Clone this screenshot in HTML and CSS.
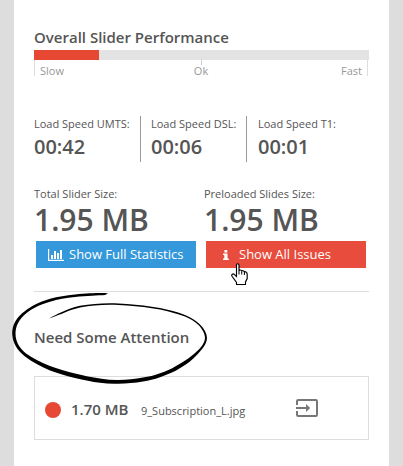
FILE: index.html
```html
<!DOCTYPE html>
<html lang="en">
<head>
<meta charset="utf-8">
<title>Slider Performance</title>
<link rel="stylesheet" href="styles.css">
</head>
<body>
<main class="panel">
  <h2 class="title">Overall Slider Performance</h2>
  <div class="bar"><div class="bar-fill"></div></div>
  <div class="scale">
    <span class="slow">Slow</span>
    <span class="ok">Ok</span>
    <span class="fast">Fast</span>
  </div>

  <section class="speeds">
    <div class="speed speed-umts"><div class="label">Load Speed UMTS:</div><div class="time">00:42</div></div>
    <div class="speed speed-dsl"><div class="label">Load Speed DSL:</div><div class="time">00:06</div></div>
    <div class="speed speed-t1"><div class="label">Load Speed T1:</div><div class="time">00:01</div></div>
  </section>

  <section class="sizes">
    <div class="size">
      <div class="label">Total Slider Size:</div>
      <div class="amount">1.95 MB</div>
      <a class="button blue">
        <svg class="chart" width="16" height="12" viewBox="0 0 16 12" fill="#fff"><path d="M0 0h1.2v10.8H16V12H0zM3 6h2v4H3zM6 2h2v8H6zM9 4h2v6H9zM12 1h2v9h-2z"/></svg>
        <span class="button-text">Show Full Statistics</span>
      </a>
    </div>
    <div class="size">
      <div class="label">Preloaded Slides Size:</div>
      <div class="amount">1.95 MB</div>
      <a class="button red">
        <svg class="info" width="6" height="10" viewBox="0 0 6 10" fill="#fff"><path d="M1.4 0h2.9v2.4H1.4zM0 3.4h4.5v5.100H5.8V10H0V8.500h1.300V4.900H0z"/></svg>
        <span class="button-text">Show All Issues</span>
      </a>
      <svg class="cursor" width="18" height="23" viewBox="0 0 18 23"><path d="M5.500 13.500V2Q5.500.700 6.700.700T8 2v6Q8 7 9.300 7T10.700 8.500V8Q11 7.500 12 7.700T13.400 9V8.800Q14 8.300 15 9T16.200 11v4.500L14.500 19v2.500h-9V19.500L1.200 13.500Q.200 12 1.300 11.200T3.500 11.700z" fill="#fff" stroke="#000" stroke-width="1.150"/><path d="M8 8v3.500M10.700 8.500v3M13.400 9v3" fill="none" stroke="#000"/></svg>
    </div>
  </section>

  <div class="rule"></div>

  <div class="attention">
    <h2 class="title">Need Some Attention</h2>
    <svg class="scribble" width="200" height="96" viewBox="10 290 200 96">
      <path d="M108 293.500C104 292.800 92 293 75 294.500C66 295.500 58 296.500 50 298.800C38 302.500 31 306.500 25 311C17 317 12 324 12.200 334C12.800 343 17 350 25 356.500C33 362.500 41 366.500 50 370.500C59 373.800 67 376 75 378C84 380.200 92 381.800 100 382.800C106 383.600 112 384 118 383.700C127 383.700 135 382.800 143 381.500C149 380.500 154 379.300 160 377.200C166 375.200 172 372.500 177 370C183 366.500 189 362.500 193 358.700C201 351 206.800 345 207 338C206.800 333 204 328.500 200 324.500C196 320.500 191 317.500 185 315C177 311.800 169 309.800 160 308C149 306 138 304.800 127 304C121 303.500 116 303.200 110 303.200C99 303.200 90 304 80 305.800C73 307.500 67 309.500 62 312C57 314 53 316.200 49 318.500C54 316.800 58 315 62 313.700C68 311 74 308.800 80 307.500C90 305.500 99 304.700 110 304.700C116 304.700 121 304.900 127 305.500C138 306.300 149 307.600 160 309.500C169 311.500 177 313.500 185 316.500C190 318.500 195 321.500 199 325.500C202 329 204.800 333 205 338C204.800 344 199 350 192 355.500C187 359.500 182 362.800 176 366C171 369 166 371.500 160 373.300C154 375.500 149 376.800 143 377.500C135 379 127 379.800 118 380C112 380 106 379.500 100 378.500C92 377.500 84 375.800 75 373.500C67 371.500 59 369.500 50 366C41 362.500 33 358.500 26 353.500C19 347.500 15.800 342 15.500 334C15.500 326 19 319.500 26 313.500C32 308.500 39 304.800 50 301.700C58 299.300 66 297.900 75 297C87 295.600 98 295.600 105 295Z"/>
    </svg>
  </div>

  <div class="issue">
    <span class="dot"></span>
    <strong class="issue-size">1.70 MB</strong>
    <span class="file">9_Subscription_L.jpg</span>
    <svg class="enter" width="22" height="18" viewBox="0 0 22 18"><path d="M1 6V2.300Q1 1 2.300 1h17.400Q21 1 21 2.300v13.400Q21 17 19.700 17H2.300Q1 17 1 15.700V12" fill="none" stroke="#777" stroke-width="2"/><path d="M0 8.100h10V5l4.200 4L10 13V9.900H0z" fill="#777"/></svg>
  </div>
</main>
</body>
</html>
```
FILE: styles.css
```css
* { box-sizing: border-box; }
body {
  margin: 0;
  background: #ddd;
  color: #555;
  font-family: "Open Sans", sans-serif;
}
.panel {
  width: 375px;
  height: 466px;
  margin-left: 14px;
  padding: 27px 20px 0;
  background: #fff;
}
.title {
  margin: 0;
  font-size: 15px;
  line-height: 20px;
  font-weight: 600;
  white-space: nowrap;
}
.bar {
  height: 10px;
  margin-top: 3px;
  background: #e3e3e3;
}
.bar-fill {
  width: 65px;
  height: 10px;
  background: #e64834;
}
.scale {
  display: flex;
  justify-content: space-between;
  width: 334px;
  height: 16px;
  padding: 0 5px;
  border: solid #ddd;
  border-width: 0 1px;
  color: #999;
  font-size: 11px;
  line-height: 22px;
}
.ok {
  margin-left: -3px;
  background: linear-gradient(#ccc, #ccc) 50% 0 / 1px 5px no-repeat;
}
.speeds {
  display: flex;
  height: 46px;
  margin-top: 40px;
}
.speed {
  white-space: nowrap;
}
.speed-umts { width: 107px; border-right: 1px solid #999; }
.speed-dsl { width: 106px; padding-left: 10px; border-right: 1px solid #999; }
.speed-t1 { padding-left: 11px; }
.label {
  font-size: 11px;
  line-height: 16px;
}
.time {
  margin-top: 3px;
  font-size: 20px;
  line-height: 24px;
  font-weight: 600;
}
.sizes {
  display: flex;
  margin-top: 24px;
}
.size {
  position: relative;
  flex: none;
  width: 170px;
}
.amount {
  margin-top: 1px;
  font-size: 30px;
  line-height: 34px;
  font-weight: 600;
}
.button {
  display: flex;
  align-items: center;
  width: 160px;
  height: 27px;
  margin: 4px 0 0 2px;
  color: #fff;
  font-size: 13px;
  line-height: 27px;
  white-space: nowrap;
}
.blue { padding-left: 12px; background: #3498db; }
.red { padding-left: 17px; background: #e74c3c; }
.chart { margin-right: 5px; }
.info { margin-right: 10px; }
.cursor {
  position: absolute;
  left: 27px;
  top: 77px;
}
.rule {
  height: 1px;
  margin-top: 23px;
  background: #ddd;
}
.attention {
  position: relative;
  height: 84px;
  padding-top: 35px;
}
.scribble {
  position: absolute;
  left: -24px;
  top: -2px;
  z-index: 1;
  fill: #000;
}
.issue {
  display: flex;
  align-items: center;
  height: 64px;
  padding-left: 10px;
  border: 1px solid #ddd;
}
.dot {
  width: 16px;
  height: 16px;
  margin-top: 3px;
  border-radius: 50%;
  background: #e64834;
}
.issue-size {
  width: 70px;
  margin: 2px 0 0 10px;
  font-size: 15px;
  line-height: 20px;
  font-weight: 600;
}
.file {
  width: 155px;
  margin-top: 6px;
  font-size: 11px;
  line-height: 16px;
}
```
